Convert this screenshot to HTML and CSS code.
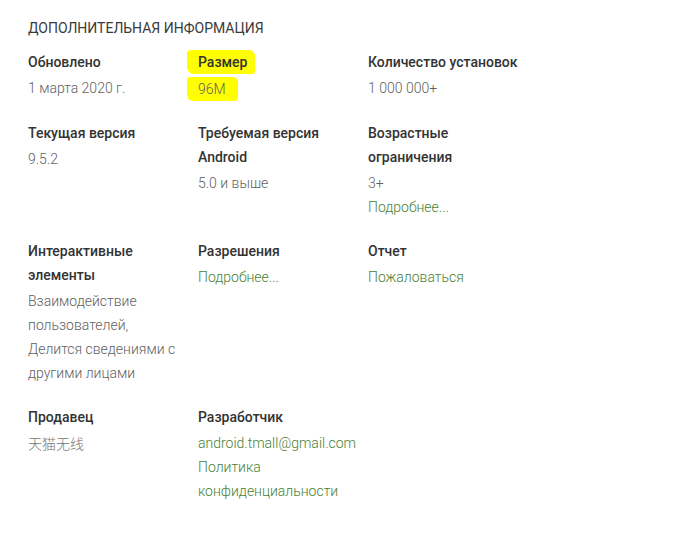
FILE: index.html
```html
<!DOCTYPE html>
<html lang="ru">
<head>
<meta charset="utf-8">
<link rel="stylesheet" href="styles.css">
</head>
<body>
<section class="info">
  <h2 class="title">Дополнительная информация</h2>
  <div class="grid">
    <div class="item">
      <div class="label">Обновлено</div>
      <div class="value">1 марта 2020 г.</div>
    </div>
    <div class="item">
      <div class="label"><span class="mark mark-label">Размер</span></div>
      <div class="value"><span class="mark mark-value">96M</span></div>
    </div>
    <div class="item">
      <div class="label">Количество установок</div>
      <div class="value">1 000 000+</div>
    </div>

    <div class="item">
      <div class="label">Текущая версия</div>
      <div class="value">9.5.2</div>
    </div>
    <div class="item">
      <div class="label">Требуемая версия Android</div>
      <div class="value">5.0 и выше</div>
    </div>
    <div class="item">
      <div class="label">Возрастные ограничения</div>
      <div class="value">3+<br><a class="link" href="#">Подробнее...</a></div>
    </div>

    <div class="item">
      <div class="label">Интерактивные элементы</div>
      <div class="value">Взаимодействие пользователей, Делится сведениями с другими лицами</div>
    </div>
    <div class="item">
      <div class="label">Разрешения</div>
      <div class="value"><a class="link" href="#">Подробнее...</a></div>
    </div>
    <div class="item">
      <div class="label">Отчет</div>
      <div class="value"><a class="link" href="#">Пожаловаться</a></div>
    </div>

    <div class="item">
      <div class="label">Продавец</div>
      <div class="value cjk">天猫无线</div>
    </div>
    <div class="item">
      <div class="label">Разработчик</div>
      <div class="value"><a class="link" href="#">android.tmall@gmail.com</a><br><a class="link" href="#">Политика конфиденциальности</a></div>
    </div>
  </div>
</section>
</body>
</html>
```
FILE: styles.css
```css
html, body {
  margin: 0;
  padding: 0;
  background: #ffffff;
}
body {
  font-family: Roboto, "Noto Sans", Arial, sans-serif;
  font-size: 14px;
  line-height: 24px;
  color: #333333;
}
.info {
  padding: 16px 0 0 28px;
}
.title {
  margin: 0 0 10px 0;
  font-size: 14px;
  font-weight: 400;
  line-height: 24px;
  text-transform: uppercase;
  color: #3a3a3a;
}
.grid {
  display: grid;
  grid-template-columns: 170px 170px 170px;
  row-gap: 20px;
}
.item {
  padding-right: 14px;
}
.label {
  font-weight: 500;
  color: #333333;
}
.value {
  margin-top: 2px;
  font-weight: 300;
  color: #616161;
}
.cjk {
  font-family: "Noto Sans CJK SC", "Noto Sans", sans-serif;
  font-weight: 300;
  color: #757575;
}
.link {
  color: #4a7f32;
  text-decoration: none;
}
.mark {
  display: inline-block;
  background: #ffff00;
}
.mark-label {
  margin-left: -11px;
  padding: 0 8px 0 11px;
  border-radius: 4px 6px 3px 7px;
}
.mark-value {
  margin-left: -11px;
  padding: 2px 12px 1px 11px;
  margin-top: 1px;
  line-height: 21px;
  border-radius: 3px 5px 4px 6px;
}
```
